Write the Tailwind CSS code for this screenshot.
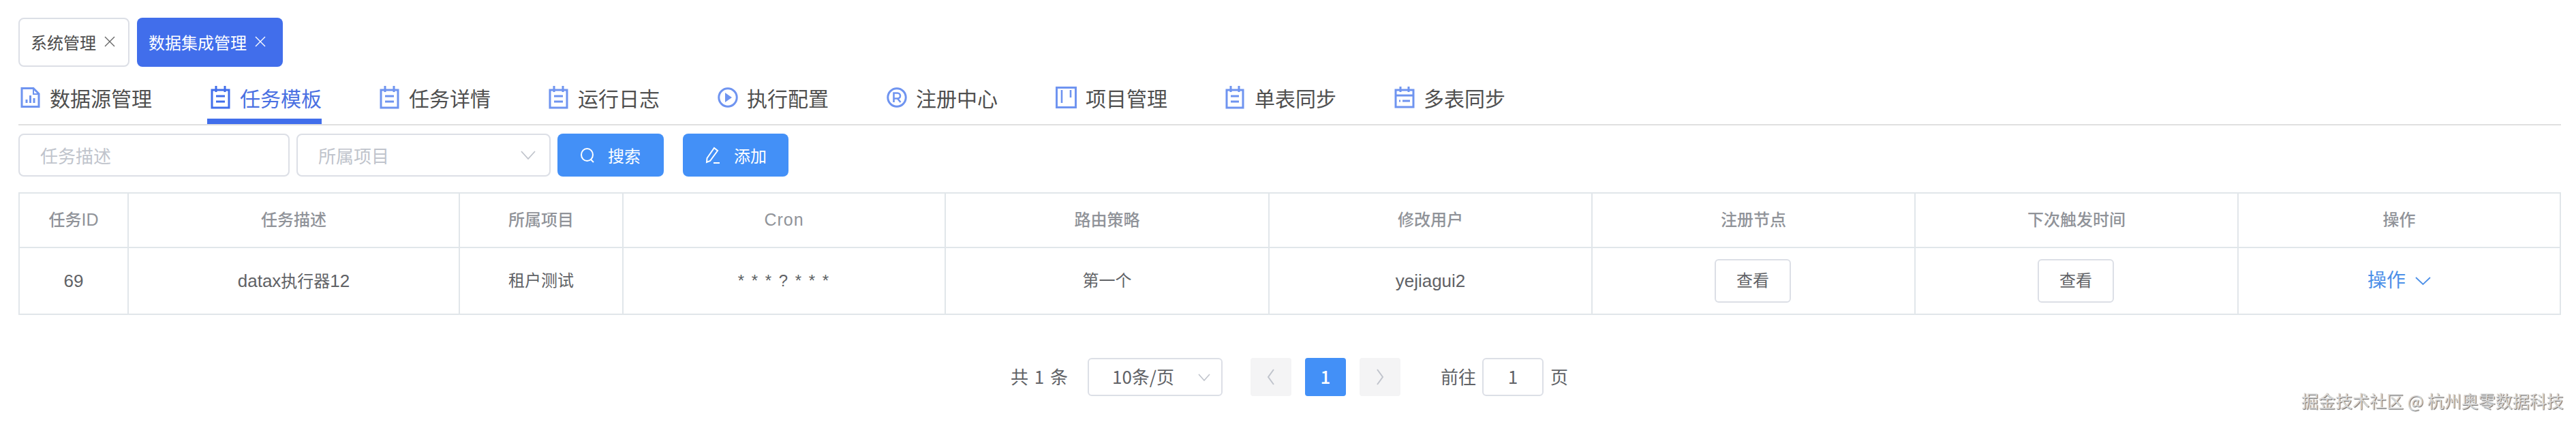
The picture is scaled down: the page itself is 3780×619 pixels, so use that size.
<!DOCTYPE html>
<html lang="zh-CN">
  <head>
    <meta charset="UTF-8" />
    <title>任务模板</title>
    <script src="https://cdn.jsdelivr.net/npm/@tailwindcss/browser@4"></script>
  </head>
  <body class="bg-white h-[619px] overflow-hidden relative font-['Noto_Sans_CJK_SC','Noto_Sans',sans-serif]">
    <div class="pl-[27px] pr-[22px] pt-[26px]">
      <!-- Open menu tags -->
      <div class="flex gap-[11px] h-[72px] text-[24px]">
        <div class="w-[163px] flex items-center pl-[16px] border-2 border-[#dcdfe6] rounded-[8px] text-[#4c4c4c]">
          <span>系统管理</span>
          <svg class="ml-[11px] -mt-[3px]" width="18" height="18" viewBox="0 0 18 18" fill="none" stroke="#666" stroke-width="1.4"><path d="M2 2l14 14M16 2L2 16" /></svg>
        </div>
        <div class="w-[214px] flex items-center pl-[17px] rounded-[8px] bg-[#416eeb] text-white">
          <span>数据集成管理</span>
          <svg class="ml-[11px] -mt-[3px]" width="18" height="18" viewBox="0 0 18 18" fill="none" stroke="#fff" stroke-width="1.4"><path d="M2 2l14 14M16 2L2 16" /></svg>
        </div>
      </div>

      <!-- Tabs -->
      <div class="flex gap-[80px] h-[86px] border-b-2 border-[#e0e0e0] text-[30px] leading-none text-[#4f4f4f]">
        <div class="-ml-[2px] mr-[1px] h-[84px] pt-[14px] pl-[5px] flex items-center border-b-8 border-transparent">
          <svg class="w-[30px] h-[32px] mr-[13px]" viewBox="0 0 30 32" fill="none" stroke="#6f94f0" stroke-width="3"><path d="M2 2.500h17l8 8v19H2z" /><path d="M19 2v9h8" stroke-width="2" /><path d="M9 24v-5M14.500 24V13M20 24v-7" /></svg>
          <span>数据源管理</span>
        </div>
        <div class="h-[84px] pt-[14px] pl-[5px] flex items-center border-b-8 border-[#416eeb] text-[#4a70e2]">
          <svg class="w-[30px] h-[34px] mr-[13px]" viewBox="0 0 30 34" fill="none" stroke="#416eeb" stroke-width="3"><path d="M2 6h25v26H2zM8 0v9M21 0v9M8 15h13M8 23h13" /></svg>
          <span>任务模板</span>
        </div>
        <div class="h-[84px] pt-[14px] pl-[5px] flex items-center border-b-8 border-transparent">
          <svg class="w-[30px] h-[34px] mr-[13px]" viewBox="0 0 30 34" fill="none" stroke="#6f94f0" stroke-width="3"><path d="M2 6h25v26H2zM8 0v9M21 0v9M8 15h13M8 23h13" /></svg>
          <span>任务详情</span>
        </div>
        <div class="h-[84px] pt-[14px] pl-[5px] flex items-center border-b-8 border-transparent">
          <svg class="w-[30px] h-[34px] mr-[13px]" viewBox="0 0 30 34" fill="none" stroke="#6f94f0" stroke-width="3"><path d="M2 6h25v26H2zM8 0v9M21 0v9M8 15h13M8 23h13" /></svg>
          <span>运行日志</span>
        </div>
        <div class="h-[84px] pt-[14px] pl-[5px] flex items-center border-b-8 border-transparent">
          <svg class="w-[30px] h-[30px] mr-[13px]" viewBox="0 0 30 30" fill="none"><circle cx="15" cy="15" r="13.200" stroke="#6f94f0" stroke-width="3" /><path d="M11 8l10 7-10 7z" fill="#6f94f0" /></svg>
          <span>执行配置</span>
        </div>
        <div class="h-[84px] pt-[14px] pl-[5px] flex items-center border-b-8 border-transparent">
          <svg class="w-[30px] h-[30px] mr-[13px]" viewBox="0 0 30 30" fill="none" stroke="#6f94f0"><circle cx="15" cy="15" r="13.200" stroke-width="3" /><path d="M10.500 22V8.500h5.500a4 4 0 0 1 0 8h-5.500M16 16.500l4.500 5.500" stroke-width="2.600" /></svg>
          <span>注册中心</span>
        </div>
        <div class="h-[84px] pt-[14px] pl-[5px] flex items-center border-b-8 border-transparent">
          <svg class="w-[31px] h-[32px] mr-[13px]" viewBox="0 0 31 32" fill="none" stroke="#6f94f0"><path d="M1.500 1.500h28v29h-28z" stroke-width="3" /><path d="M9 5v19M22 5v11" stroke-width="2.600" /></svg>
          <span>项目管理</span>
        </div>
        <div class="h-[84px] pt-[14px] pl-[5px] flex items-center border-b-8 border-transparent">
          <svg class="w-[30px] h-[34px] mr-[13px]" viewBox="0 0 30 34" fill="none" stroke="#6f94f0" stroke-width="3"><path d="M2 6h24v26H2zM8 0v9M20 0v9M8 15h12M8 23h12" /></svg>
          <span>单表同步</span>
        </div>
        <div class="h-[84px] pt-[14px] pl-[5px] flex items-center border-b-8 border-transparent">
          <svg class="w-[30px] h-[32px] mr-[13px]" viewBox="0 0 30 32" fill="none" stroke="#6f94f0" stroke-width="3"><path d="M2 5h26v25H2zM2 13h26M9 0v8M21 0v8M7 21h2M12 21h11" /></svg>
          <span>多表同步</span>
        </div>
      </div>

      <!-- Search bar -->
      <div class="flex mt-[12px] h-[63px] text-[26px]">
        <div class="w-[398px] flex items-center pl-[30px] border-2 border-[#dcdfe6] rounded-[8px] text-[#c0c4cc]">任务描述</div>
        <div class="ml-[10px] w-[373px] flex items-center justify-between pl-[30px] pr-[20px] border-2 border-[#dcdfe6] rounded-[8px] text-[#c0c4cc]">
          <span>所属项目</span>
          <svg width="22" height="14" viewBox="0 0 22 14" fill="none" stroke="#c0c4cc" stroke-width="1.800"><path d="M1 1l10 11L21 1" /></svg>
        </div>
        <button class="ml-[10px] w-[156px] flex items-center rounded-[8px] bg-[#4390f7] text-white text-[24px] pl-[33px]">
          <svg class="mr-[19px]" width="22" height="24" viewBox="0 0 22 24" fill="none" stroke="#fff" stroke-width="2"><ellipse cx="10.500" cy="11" rx="8.500" ry="9" /><path d="M16 18l4 4" /></svg>
          <span>搜索</span>
        </button>
        <button class="ml-[28px] w-[155px] flex items-center rounded-[8px] bg-[#4390f7] text-white text-[24px] pl-[33px]">
          <svg class="mr-[20px]" width="22" height="26" viewBox="0 0 22 26" fill="none" stroke="#fff" stroke-width="2"><path d="M13 2l5 4L7 21l-5 2 .5-6zM12 24h9" /></svg>
          <span>添加</span>
        </button>
      </div>

      <!-- Table -->
      <table class="mt-[23px] w-[3731px] table-fixed border-collapse text-center text-[24px] font-['Liberation_Sans','Noto_Sans_CJK_SC',sans-serif]">
        <colgroup>
          <col class="w-[160px]" /><col class="w-[486px]" /><col class="w-[240px]" /><col class="w-[473px]" /><col class="w-[475px]" /><col class="w-[474px]" /><col class="w-[474px]" /><col class="w-[474px]" /><col class="w-[473px]" />
        </colgroup>
        <thead>
          <tr class="h-[80px] text-[#909399]">
            <th class="border-2 border-[#e1e6ea] font-medium">任务<span class="text-[25px]">ID</span></th>
            <th class="border-2 border-[#e1e6ea] font-medium">任务描述</th>
            <th class="border-2 border-[#e1e6ea] font-medium">所属项目</th>
            <th class="border-2 border-[#e1e6ea] font-medium text-[25px] tracking-[1px]">Cron</th>
            <th class="border-2 border-[#e1e6ea] font-medium">路由策略</th>
            <th class="border-2 border-[#e1e6ea] font-medium">修改用户</th>
            <th class="border-2 border-[#e1e6ea] font-medium">注册节点</th>
            <th class="border-2 border-[#e1e6ea] font-medium">下次触发时间</th>
            <th class="border-2 border-[#e1e6ea] font-medium">操作</th>
          </tr>
        </thead>
        <tbody>
          <tr class="h-[98px] text-[#606266]">
            <td class="border-2 border-[#e1e6ea] text-[26px]">69</td>
            <td class="border-2 border-[#e1e6ea] text-[26px]">datax<span class="text-[24px]">执行器</span>12</td>
            <td class="border-2 border-[#e1e6ea]">租户测试</td>
            <td class="border-2 border-[#e1e6ea] tracking-[2px]">* * * ? * * *</td>
            <td class="border-2 border-[#e1e6ea]">第一个</td>
            <td class="border-2 border-[#e1e6ea] text-[26px]">yejiagui2</td>
            <td class="border-2 border-[#e1e6ea]">
              <button class="w-[112px] h-[64px] -ml-[2px] border-2 border-[#dcdfe6] rounded-[6px] text-[#606266]">查看</button>
            </td>
            <td class="border-2 border-[#e1e6ea]">
              <button class="w-[112px] h-[64px] -ml-[2px] border-2 border-[#dcdfe6] rounded-[6px] text-[#606266]">查看</button>
            </td>
            <td class="border-2 border-[#e1e6ea]">
              <div class="flex items-center justify-center text-[28px] text-[#4c8fe8]">
                <span>操作</span>
                <svg class="ml-[14px]" width="23" height="13" viewBox="0 0 23 13" fill="none" stroke="#4c8fe8" stroke-width="1.800"><path d="M1 1l10.500 10L22 1" /></svg>
              </div>
            </td>
          </tr>
        </tbody>
      </table>

      <!-- Pagination -->
      <div class="flex items-center mt-[63px] ml-[1456px] h-[56px] text-[26px] text-[#606266]">
        <span class="w-[82px] whitespace-nowrap -mt-[3px] [word-spacing:3px]">共 1 条</span>
        <div class="ml-[31px] w-[198px] h-full flex items-center pl-[34px] pr-[16px] justify-between border-2 border-[#dcdfe6] rounded-[6px]">
          <span class="whitespace-nowrap -mt-[3px]">10条/页</span>
          <svg width="18" height="11" viewBox="0 0 18 11" fill="none" stroke="#c0c4cc" stroke-width="1.600"><path d="M1 1l8 9 8-9" /></svg>
        </div>
        <div class="ml-[41px] w-[60px] h-full flex items-center justify-center bg-[#f4f4f5] rounded-[4px]">
          <svg width="12" height="24" viewBox="0 0 12 24" fill="none" stroke="#c0c4cc" stroke-width="2"><path d="M10 1L2 12l8 11" /></svg>
        </div>
        <div class="ml-[20px] w-[60px] h-full flex items-center justify-center pb-[3px] bg-[#4390f7] rounded-[4px] text-white font-medium">1</div>
        <div class="ml-[20px] w-[60px] h-full flex items-center justify-center bg-[#f4f4f5] rounded-[4px]">
          <svg width="12" height="24" viewBox="0 0 12 24" fill="none" stroke="#c0c4cc" stroke-width="2"><path d="M2 1l8 11-8 11" /></svg>
        </div>
        <span class="ml-[59px] w-[52px] -mt-[3px]">前往</span>
        <div class="ml-[9px] w-[90px] h-full flex items-center justify-center pb-[3px] border-2 border-[#dcdfe6] rounded-[6px]">1</div>
        <span class="ml-[10px] -mt-[3px]">页</span>
      </div>
    </div>

    <!-- Watermark -->
    <div class="absolute left-[3377px] top-[569px] whitespace-nowrap text-[25px] text-[#d8d8d8] [text-shadow:1px_1px_1px_#666]">掘金技术社区 @ 杭州奥零数据科技</div>
  </body>
</html>
